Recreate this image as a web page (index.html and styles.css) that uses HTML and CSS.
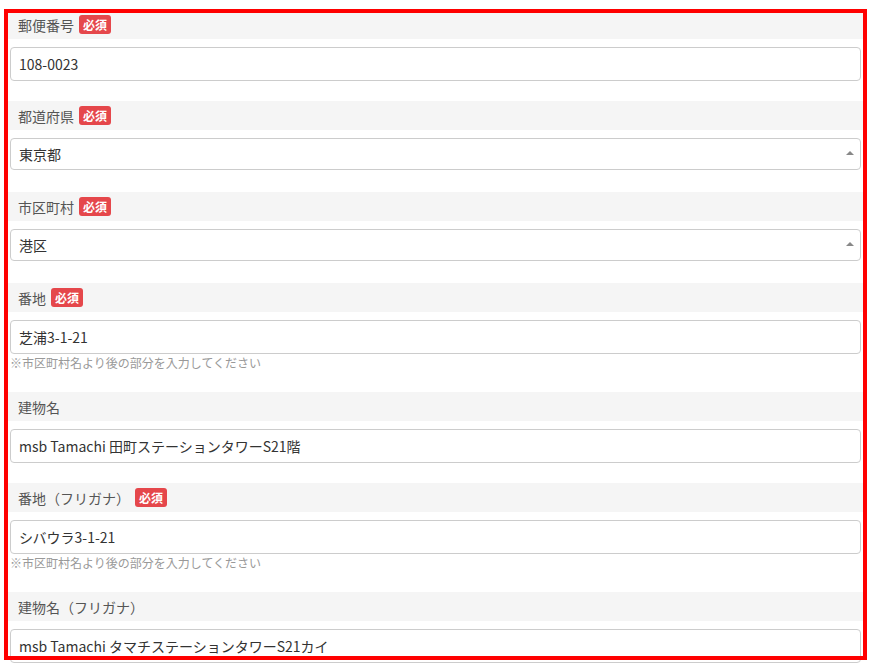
FILE: index.html
```html
<!DOCTYPE html>
<html lang="ja">
<head>
    <meta charset="UTF-8">
    <meta name="viewport" content="width=device-width, initial-scale=1.0">
    <title>住所入力</title>
    <link rel="stylesheet" href="styles.css">
</head>
<body>
    <div class="address-form">
        <div class="field">
            <div class="field-label">郵便番号<span class="required">必須</span></div>
            <input class="field-input" type="text" value="108-0023">
        </div>

        <div class="field">
            <div class="field-label">都道府県<span class="required">必須</span></div>
            <div class="select-wrap">
                <select class="field-select">
                    <option>東京都</option>
                </select>
            </div>
        </div>

        <div class="field">
            <div class="field-label">市区町村<span class="required">必須</span></div>
            <div class="select-wrap">
                <select class="field-select">
                    <option>港区</option>
                </select>
            </div>
        </div>

        <div class="field">
            <div class="field-label">番地<span class="required">必須</span></div>
            <input class="field-input" type="text" value="芝浦3-1-21">
            <p class="field-hint">※市区町村名より後の部分を入力してください</p>
        </div>

        <div class="field">
            <div class="field-label">建物名</div>
            <input class="field-input" type="text" value="msb Tamachi 田町ステーションタワーS21階">
        </div>

        <div class="field">
            <div class="field-label">番地（フリガナ）<span class="required">必須</span></div>
            <input class="field-input" type="text" value="シバウラ3-1-21">
            <p class="field-hint">※市区町村名より後の部分を入力してください</p>
        </div>

        <div class="field">
            <div class="field-label">建物名（フリガナ）</div>
            <input class="field-input" type="text" value="msb Tamachi タマチステーションタワーS21カイ">
        </div>
    </div>

    <!-- annotation frame from the screenshot -->
    <div class="highlight"></div>
</body>
</html>
```

FILE: styles.css
```css
body {
    margin: 0;
    padding: 0;
    background-color: #fff;
    font-family: "Noto Sans CJK JP", "Noto Sans", sans-serif;
    color: #333;
    overflow: hidden;
}
.address-form {
    padding: 10px 8px 0 8px;
}
.field {
    margin-bottom: 20px;
}
.field-label {
    display: flex;
    align-items: center;
    height: 29px;
    padding: 0 10px;
    background-color: #f5f5f5;
    color: #555;
    font-size: 14px;
}
.required {
    display: inline-block;
    margin-left: 5px;
    padding: 0 4px;
    height: 19px;
    line-height: 19px;
    border-radius: 3px;
    background-color: #e5474b;
    color: #fff;
    font-size: 12px;
    font-weight: bold;
}
.field-input,
.field-select {
    display: block;
    box-sizing: border-box;
    width: calc(100% - 4px);
    margin: 8px 2px 0 2px;
    padding: 0 8px;
    border: 1px solid #ccc;
    border-radius: 4px;
    background-color: #fff;
    color: #333;
    font-family: inherit;
    font-size: 14px;
    outline: none;
}
.field-input {
    height: 34px;
}
.select-wrap {
    position: relative;
    padding-bottom: 2px;
}
.field-select {
    height: 32px;
    -webkit-appearance: none;
    appearance: none;
}
.select-wrap::after {
    content: "";
    position: absolute;
    right: 9px;
    top: 13px;
    border-left: 4px solid transparent;
    border-right: 4px solid transparent;
    border-bottom: 4px solid #888;
}
.field-hint {
    margin: 0 0 0 2px;
    height: 18px;
    line-height: 18px;
    color: #999;
    font-size: 12px;
}
.highlight {
    position: absolute;
    left: 4px;
    top: 9px;
    width: 855px;
    height: 643px;
    border: 4px solid #f00;
    pointer-events: none;
}
```
